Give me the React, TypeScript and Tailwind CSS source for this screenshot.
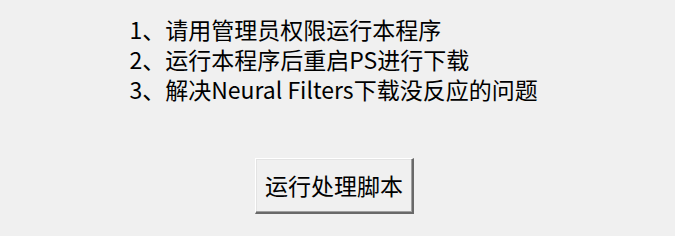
import React from "react";

const steps = [
  "1、请用管理员权限运行本程序",
  "2、运行本程序后重启PS进行下载",
  "3、解决Neural Filters下载没反应的问题",
];

export default function App() {
  return (
    <div
      className="w-full h-[236px] bg-[#f0f0f0] flex flex-col items-center pt-[14px] text-black"
      style={{ fontFamily: '"Noto Sans CJK SC", "Noto Sans", sans-serif' }}
    >
      {/* Instructions */}
      <div className="flex flex-col items-start text-[23px] leading-[30px] ml-[-8px]">
        {steps.map((s) => (
          <div key={s}>{s}</div>
        ))}
      </div>

      {/* Classic push button */}
      <button
        className="mt-[54px] ml-[-6px] w-[159px] h-[56px] bg-[#f0f0f0] text-[23px] leading-none text-black border border-t-white border-l-white border-r-[#696969] border-b-[#696969] border-b-2 border-r-2 shadow-[inset_-1px_-1px_0_#a0a0a0,inset_1px_1px_0_#e3e3e3] flex items-center justify-center"
      >
        运行处理脚本
      </button>
    </div>
  );
}
